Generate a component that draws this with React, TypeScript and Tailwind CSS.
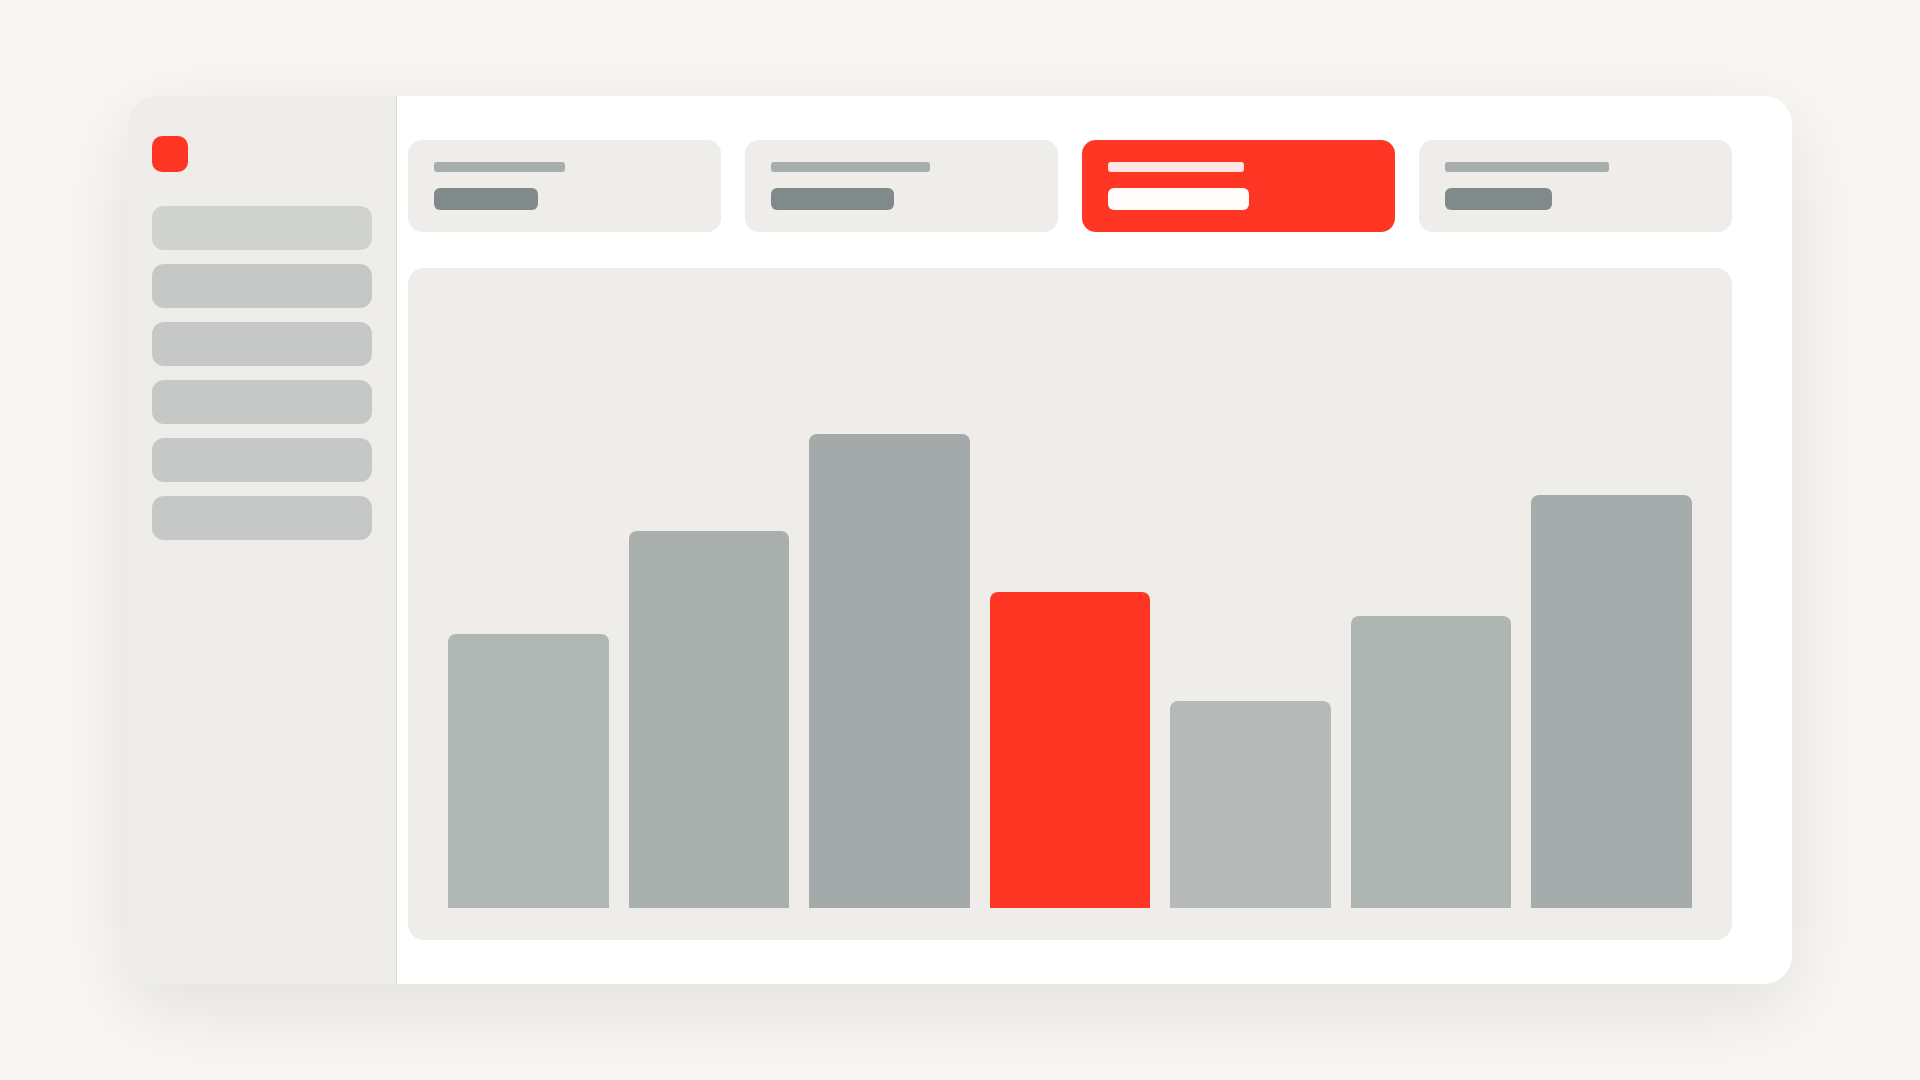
type Stat = { label: number; value: number; active?: boolean };
type Bar = { height: number; color: string };

const navItems = [
  'bg-[#d0d2cf]',
  'bg-[#c6c8c7]',
  'bg-[#c6c8c7]',
  'bg-[#c6c8c7]',
  'bg-[#c6c8c7]',
  'bg-[#c6c8c7]',
];

const stats: Stat[] = [
  { label: 50, value: 40 },
  { label: 61, value: 47 },
  { label: 52, value: 54, active: true },
  { label: 63, value: 41 },
];

const bars: Bar[] = [
  { height: 45, color: 'bg-[#b0b6b4]' },
  { height: 62, color: 'bg-[#a9afad]' },
  { height: 78, color: 'bg-[#a4aaaa]' },
  { height: 52, color: 'bg-[#ff3623]' },
  { height: 34, color: 'bg-[#b5b9b8]' },
  { height: 48, color: 'bg-[#afb5b3]' },
  { height: 68, color: 'bg-[#a6acab]' },
];

function Sidebar() {
  return (
    <aside className="flex w-[269px] shrink-0 flex-col border-r border-[#d9dad7] bg-[#eeede9] px-6 py-10">
      <div className="size-9 rounded-[10px] bg-[#ff3623]" />
      <nav className="mt-[34px]">
        <ul className="flex flex-col gap-3.5">
          {navItems.map((color, i) => (
            <li key={i} className={`h-11 rounded-xl ${color}`} />
          ))}
        </ul>
      </nav>
    </aside>
  );
}

function StatCard({ label, value, active }: Stat) {
  return (
    <div
      className={`flex flex-col gap-4 rounded-[14px] px-[26px] py-[22px] ${
        active ? 'bg-[#ff3623]' : 'bg-[#eeede9]'
      }`}
    >
      <div
        className={`h-2.5 rounded-[3px] ${active ? 'bg-[#ffe5e4]' : 'bg-[#a7adac]'}`}
        style={{ width: `${label}%` }}
      />
      <div
        className={`h-[22px] rounded-md ${active ? 'bg-[#fffcfb]' : 'bg-[#818a8a]'}`}
        style={{ width: `${value}%` }}
      />
    </div>
  );
}

function BarChart() {
  return (
    <section className="flex flex-1 rounded-2xl bg-[#eeede9] px-10 py-8">
      <div className="flex flex-1 gap-5">
        {bars.map(({ height, color }, i) => (
          <div key={i} className="flex flex-1 flex-col justify-end">
            <div className={`rounded-t-lg ${color}`} style={{ height: `${height}%` }} />
          </div>
        ))}
      </div>
    </section>
  );
}

export default function App() {
  return (
    <div className="flex min-h-screen bg-[#f8f7f3] px-32 py-24">
      <div className="flex flex-1 overflow-hidden rounded-[28px] bg-white shadow-[0_24px_80px_rgba(20,24,24,0.1)]">
        <Sidebar />
        <main className="flex flex-1 flex-col gap-9 py-11 pr-[60px] pl-[11px]">
          <section className="grid grid-cols-4 gap-6">
            {stats.map((stat, i) => (
              <StatCard key={i} {...stat} />
            ))}
          </section>
          <BarChart />
        </main>
      </div>
    </div>
  );
}
